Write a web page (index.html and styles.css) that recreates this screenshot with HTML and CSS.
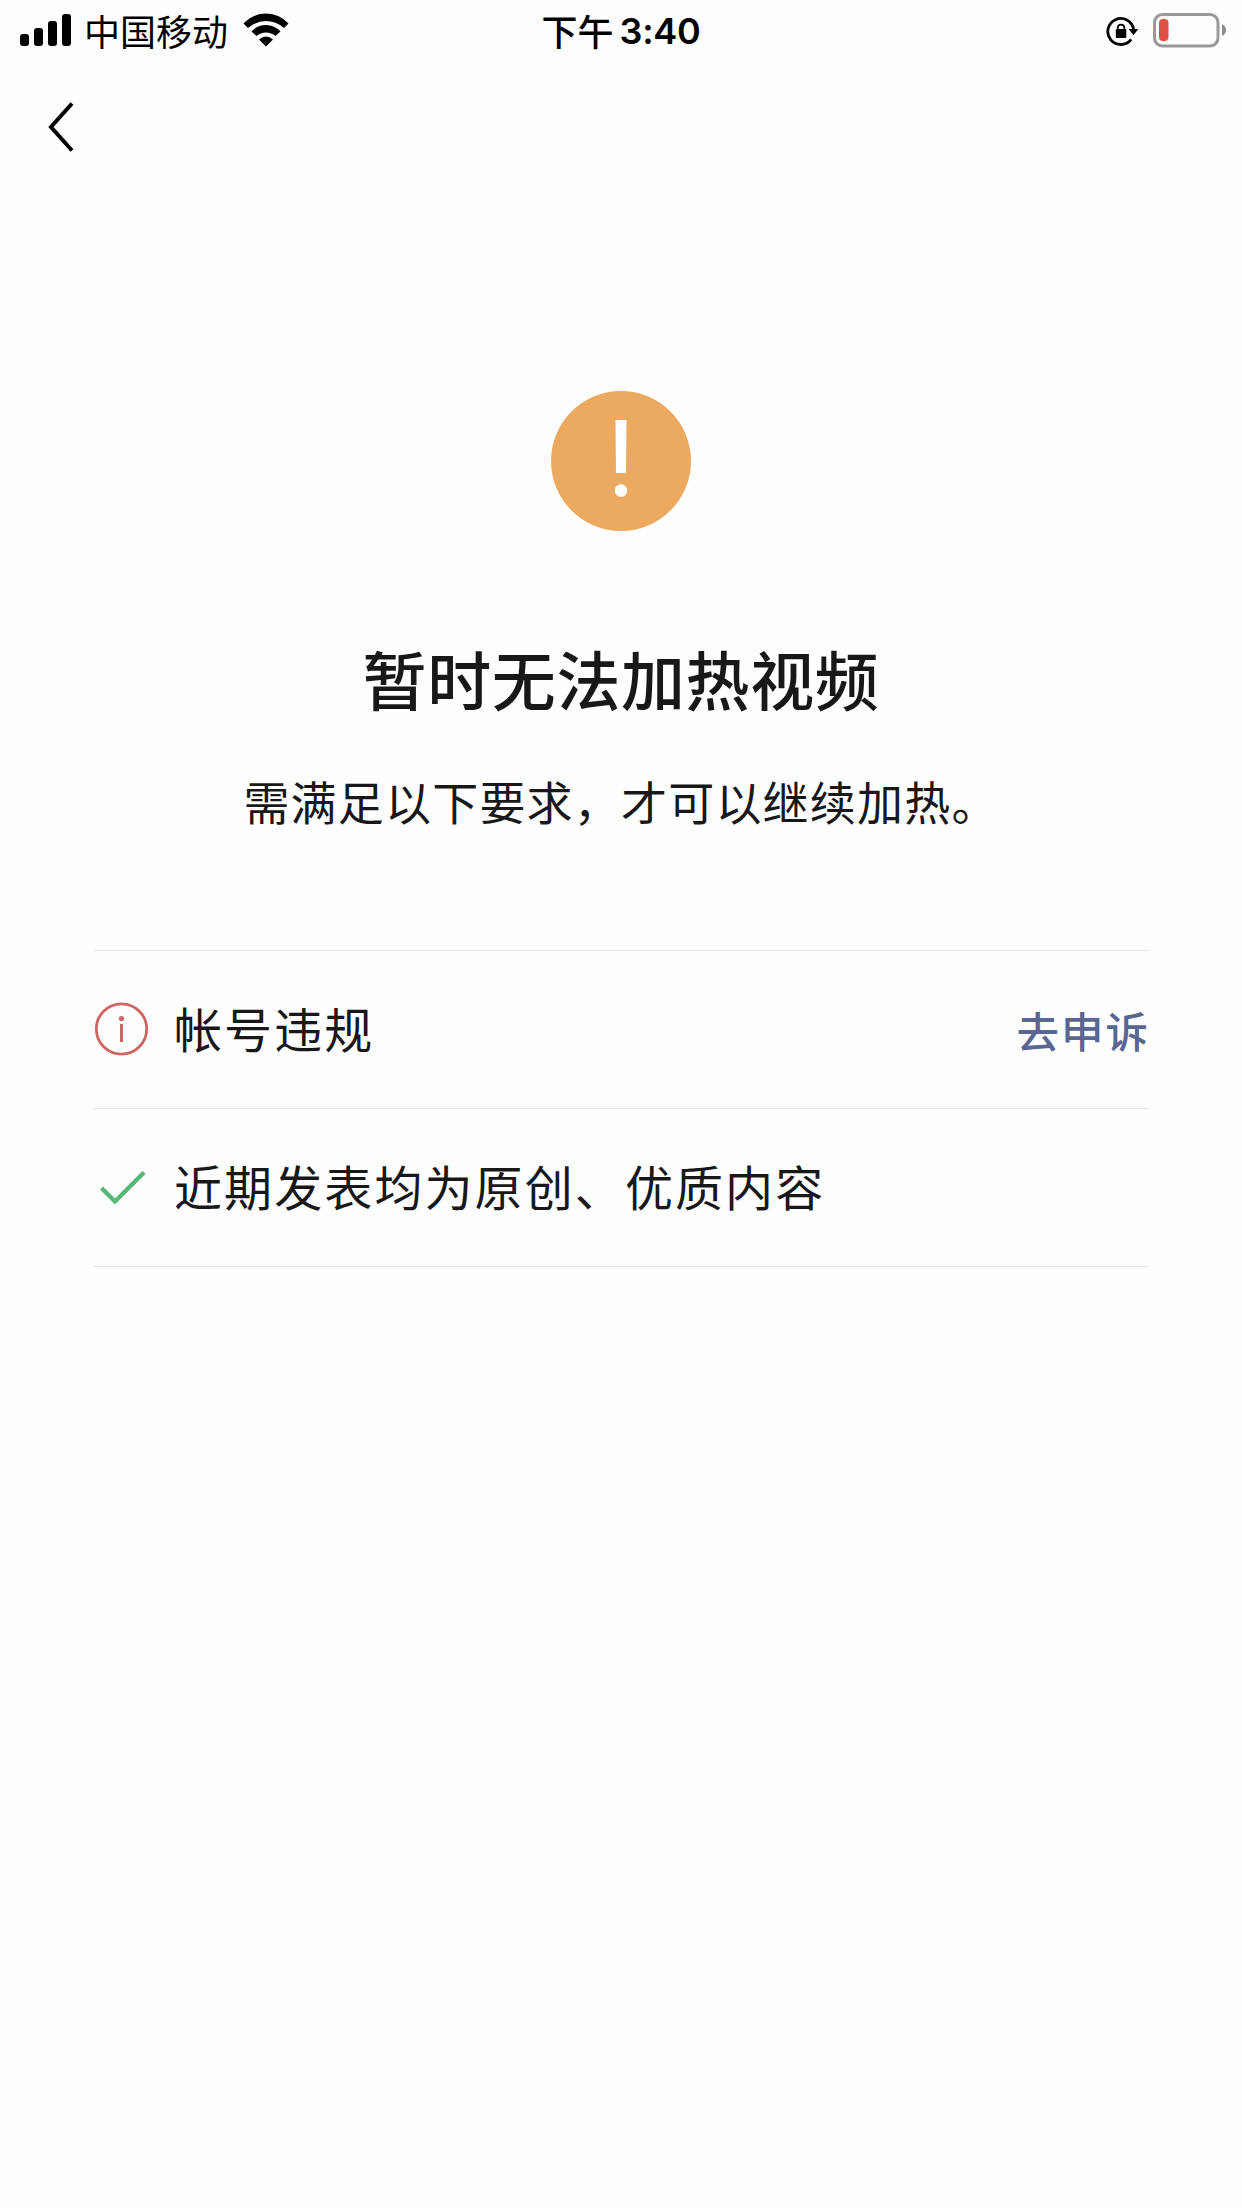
FILE: index.html
```html
<!DOCTYPE html>
<html lang="zh-CN">
<head>
<meta charset="utf-8">
<title>暂时无法加热视频</title>
<link rel="stylesheet" href="styles.css">
</head>
<body>
<header class="status">
  <div class="status-left">
    <svg class="signal" width="52" height="32" viewBox="0 0 52 32"><rect x="0" y="20" width="9" height="12" rx="3"/><rect x="14" y="14" width="9" height="18" rx="3"/><rect x="28" y="7" width="9" height="25" rx="3"/><rect x="42" y="0" width="9" height="32" rx="3"/></svg>
    <span class="carrier">中国移动</span>
    <svg class="wifi" width="46" height="34" viewBox="0 0 46 34"><path d="M0.5 10.5Q10 0.5 23 0.5T45.500 10.500L41 15Q33 8 23 8T5 15ZM8.500 18.500Q14.500 12 23 12T37.500 18.500L32.500 23Q28.500 19.500 23 19.500T13.500 23ZM16 26.500Q23 20.500 30 26.500L23 33.500Z"/></svg>
  </div>
  <div class="time"><span class="period">下午</span><span class="digits">3:40</span></div>
  <div class="status-right">
    <svg width="33" height="30" viewBox="0 0 33 30"><path d="M27.600 13.300A13 13 0 1 0 25.200 23.300" fill="none" stroke="#000" stroke-width="2.800"/><path d="M22.700 13H32.300L27.500 19.300Z"/><rect x="9.800" y="13" width="10.500" height="9" rx="1"/><path d="M11.800 13.500V11.800a3.250 3.250 0 0 1 6.500 0V13.500" fill="none" stroke="#000" stroke-width="1.700"/></svg>
    <svg width="74" height="36" viewBox="0 0 74 36"><rect x="1.500" y="1.500" width="63.500" height="31.500" rx="8" fill="none" stroke="#999" stroke-width="3"/><rect x="6" y="6" width="9.500" height="22" rx="4" fill="#dd5146"/><path d="M69 11Q73 13 73 17T69 23Z" fill="#8c8c8c"/></svg>
  </div>
</header>
<nav class="nav">
  <svg width="26" height="50" viewBox="0 0 26 50"><path d="M24 1.500L3 25L24 48.500" fill="none" stroke="#000" stroke-width="4"/></svg>
</nav>
<main class="page">
  <svg class="warn" width="140" height="140" viewBox="0 0 140 140"><circle cx="70" cy="70" r="70" fill="#ecaa60"/><path d="M64.500 29H75.500L75 82H65Z" fill="#fff"/><circle cx="70" cy="99.500" r="6.300" fill="#fff"/></svg>
  <h1 class="title">暂时无法加热视频</h1>
  <p class="subtitle">需满足以下要求，才可以继续加热。</p>
  <ul class="list">
    <li class="row">
      <svg class="icon" width="56" height="56" viewBox="0 0 56 56"><circle cx="28.500" cy="28" r="25.200" fill="none" stroke="#cd6563" stroke-width="2.800"/><circle cx="28.500" cy="17.500" r="2.600" fill="#cd6563"/><rect x="27" y="23" width="3" height="18" fill="#cd6563"/></svg>
      <span class="label">帐号违规</span>
      <a class="link">去申诉</a>
    </li>
    <li class="row">
      <svg class="icon" width="56" height="56" viewBox="0 0 56 56"><path d="M8.500 29L22 42.500L51 13.500" fill="none" stroke="#58b877" stroke-width="4.400"/></svg>
      <span class="label">近期发表均为原创、优质内容</span>
    </li>
  </ul>
</main>
</body>
</html>
```

FILE: styles.css
```css
* { box-sizing: border-box; }
body {
  margin: 0;
  min-height: 2208px;
  background: #fefefe;
  color: #181818;
  font-family: "Noto Sans CJK SC", sans-serif;
}
svg { display: block; flex: none; }
.status {
  display: grid;
  grid-template-columns: 1fr auto 1fr;
  height: 62px;
  padding: 0 15px 0 20px;
  color: #000;
  font-size: 36px;
  line-height: 56px;
}
.status-left, .status-right, .time { display: flex; align-items: center; }
.signal { margin-bottom: 2px; }
.wifi { margin-bottom: 3px; }
.carrier { margin: 0 15px 3px 12px; }
.time { padding-right: 5px; font-weight: 500; }
.period { margin-bottom: 3px; }
.digits {
  margin-left: 6px;
  font-family: Inter, sans-serif;
  font-weight: 600;
  letter-spacing: -.3px;
}
.status-right { justify-content: flex-end; gap: 14px; }
.nav { height: 130px; padding: 40px 0 0 48px; }
.page {
  display: flex;
  flex-direction: column;
  align-items: center;
  padding: 199px 93px 0;
}
.title {
  margin: 96px 0 0;
  font-size: 64px;
  font-weight: 500;
  line-height: 100px;
  letter-spacing: .6px;
}
.subtitle {
  margin: 38px 0 0;
  font-size: 46px;
  line-height: 70px;
  letter-spacing: 1.2px;
}
.list {
  width: 1056px;
  margin: 115px 0 0;
  padding: 0;
  list-style: none;
  border-top: 1px solid #e5e5e5;
}
.row {
  display: flex;
  align-items: center;
  height: 158px;
  padding-bottom: 2px;
  border-bottom: 1px solid #e5e5e5;
}
.label {
  flex: 1;
  margin: 0 0 4px 25px;
  font-size: 48px;
  letter-spacing: 2.1px;
}
.link {
  margin: 2px -1px 0 0;
  color: #596691;
  font-size: 42.5px;
  font-weight: 500;
  letter-spacing: 2px;
}
```
